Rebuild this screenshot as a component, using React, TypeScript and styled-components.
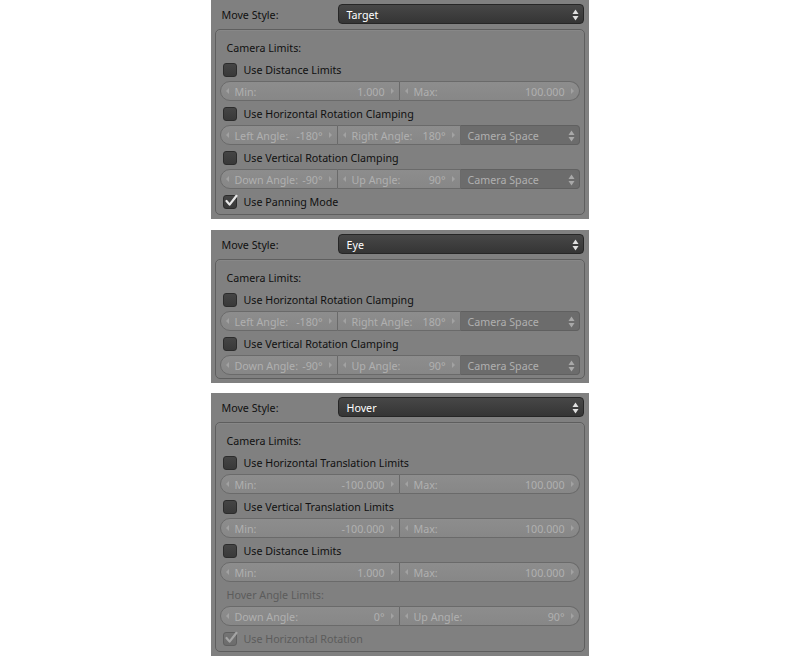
import React from "react";
import styled, { createGlobalStyle, css } from "styled-components";

const Global = createGlobalStyle`
  html, body { margin: 0; padding: 0; background: #ffffff; }
  body { font-family: "Noto Sans", "DejaVu Sans", sans-serif; font-size: 10.7px; }
`;

const Page = styled.div`
  width: 800px;
  height: 657px;
  display: flex;
  flex-direction: column;
  align-items: center;
  gap: 10px;
  overflow: hidden;
`;

const Panel = styled.div<{ $spaced?: boolean }>`
  width: 378px;
  box-sizing: border-box;
  background: #808080;
  padding: 4px;
  display: flex;
  flex-direction: column;
  margin-left: -1px;
  margin-top: ${(p) => (p.$spaced ? "1px" : "0")};
`;

const HeaderRow = styled.div`
  display: flex;
  align-items: center;
  height: 20px;
  margin-right: 1px;
`;

const HeaderLabel = styled.div`
  width: 123px;
  box-sizing: border-box;
  padding: 2px 0 0 7px;
  color: #101010;
`;

const Menu = styled.div`
  flex: 1;
  height: 20px;
  box-sizing: border-box;
  border: 1px solid #262626;
  border-radius: 4px;
  background: linear-gradient(#474747, #353535);
  color: #ffffff;
  display: flex;
  align-items: center;
  padding: 1px 4px 0 8px;
  justify-content: space-between;
`;

const Box = styled.div`
  margin-top: 5px;
  border: 1px solid #5e5e5e;
  border-radius: 5px;
  padding: 6px 4px 2px 4px;
  display: flex;
  flex-direction: column;
  box-shadow: inset 0 1px 0 rgba(255,255,255,0.06);
`;

const SectionLabel = styled.div<{ $disabled?: boolean }>`
  height: 22px;
  box-sizing: border-box;
  display: flex;
  align-items: center;
  padding: 2px 0 0 7px;
  color: ${(p) => (p.$disabled ? "#5c5c5c" : "#101010")};
`;

const CheckRow = styled.div<{ $disabled?: boolean }>`
  height: 22px;
  box-sizing: border-box;
  display: flex;
  align-items: center;
  gap: 7px;
  padding: 2px 0 0 3px;
  color: ${(p) => (p.$disabled ? "#5c5c5c" : "#101010")};
`;

const CheckBox = styled.div<{ $disabled?: boolean }>`
  width: 14px;
  height: 14px;
  box-sizing: border-box;
  border-radius: 3px;
  border: 1px solid ${(p) => (p.$disabled ? "#5f5f5f" : "#2c2c2c")};
  background: ${(p) =>
    p.$disabled ? "linear-gradient(#747474, #6c6c6c)" : "linear-gradient(#454545, #393939)"};
  display: flex;
  align-items: center;
  justify-content: center;
`;

const FieldRow = styled.div<{ $cols: string }>`
  height: 20px;
  margin: 1px 0;
  display: grid;
  grid-template-columns: ${(p) => p.$cols};
  box-sizing: border-box;
`;

const Field = styled.div<{ $first?: boolean; $last?: boolean }>`
  position: relative;
  box-sizing: border-box;
  height: 20px;
  background: linear-gradient(#8d8d8d, #878787);
  border: 1px solid #6a6a6a;
  border-left-width: ${(p) => (p.$first ? "1px" : "0")};
  ${(p) => p.$first && css`border-top-left-radius: 10px; border-bottom-left-radius: 10px;`}
  ${(p) => p.$last && css`border-top-right-radius: 10px; border-bottom-right-radius: 10px;`}
  display: flex;
  align-items: center;
  padding: 1px 14px 0 14px;
  color: #b0b0b0;
  white-space: nowrap;
`;

const FieldName = styled.span`
  flex: 1;
`;

const FieldValue = styled.span``;

const Arrow = styled.span<{ $side: "l" | "r" }>`
  position: absolute;
  top: 50%;
  margin-top: -3px;
  width: 0;
  height: 0;
  border-top: 3px solid transparent;
  border-bottom: 3px solid transparent;
  ${(p) =>
    p.$side === "l"
      ? css`left: 5px; border-right: 3px solid #a2a2a2;`
      : css`right: 5px; border-left: 3px solid #a2a2a2;`}
`;

const SpaceMenu = styled.div`
  box-sizing: border-box;
  height: 20px;
  background: #6c6c6c;
  border: 1px solid #606060;
  border-left: 0;
  border-top-right-radius: 4px;
  border-bottom-right-radius: 4px;
  color: #b0b0b0;
  display: flex;
  align-items: center;
  justify-content: space-between;
  padding: 1px 4px 0 7px;
`;

const UpDown = ({ color }: { color: string }) => (
  <svg width="7" height="12" viewBox="0 0 7 12">
    <path d="M3.5 0.5 L6.5 5 L0.5 5 Z" fill={color} />
    <path d="M3.5 11.5 L6.5 7 L0.5 7 Z" fill={color} />
  </svg>
);

const Check = ({ color }: { color: string }) => (
  <svg width="14" height="14" viewBox="0 0 14 14" style={{ marginTop: -2, marginRight: -2 }}>
    <path d="M2.5 7 L5.6 10.6 L12.5 1.8" fill="none" stroke={color} strokeWidth="2.2" strokeLinecap="round" strokeLinejoin="round" />
  </svg>
);

type NumSpec = { name: string; value: string };

const NumberField = ({ spec, first, last }: { spec: NumSpec; first?: boolean; last?: boolean }) => (
  <Field $first={first} $last={last}>
    <Arrow $side="l" />
    <FieldName>{spec.name}</FieldName>
    <FieldValue>{spec.value}</FieldValue>
    <Arrow $side="r" />
  </Field>
);

const RangeRow = ({ a, b }: { a: NumSpec; b: NumSpec }) => (
  <FieldRow $cols="1fr 1fr">
    <NumberField spec={a} first />
    <NumberField spec={b} last />
  </FieldRow>
);

const AngleRow = ({ a, b }: { a: NumSpec; b: NumSpec }) => (
  <FieldRow $cols="118px 123px 1fr">
    <NumberField spec={a} first />
    <NumberField spec={b} />
    <SpaceMenu>
      <span>Camera Space</span>
      <UpDown color="#a9a9a9" />
    </SpaceMenu>
  </FieldRow>
);

const CheckItem = ({ label, checked, disabled }: { label: string; checked?: boolean; disabled?: boolean }) => (
  <CheckRow $disabled={disabled}>
    <CheckBox $disabled={disabled}>{checked && <Check color={disabled ? "#a4a4a4" : "#e8e8e8"} />}</CheckBox>
    <span>{label}</span>
  </CheckRow>
);

const Header = ({ value }: { value: string }) => (
  <HeaderRow>
    <HeaderLabel>Move Style:</HeaderLabel>
    <Menu>
      <span>{value}</span>
      <UpDown color="#e0e0e0" />
    </Menu>
  </HeaderRow>
);

export default function App() {
  return (
    <>
      <Global />
      <Page>
        <Panel>
          <Header value="Target" />
          <Box>
            <SectionLabel>Camera Limits:</SectionLabel>
            <CheckItem label="Use Distance Limits" />
            <RangeRow a={{ name: "Min:", value: "1.000" }} b={{ name: "Max:", value: "100.000" }} />
            <CheckItem label="Use Horizontal Rotation Clamping" />
            <AngleRow a={{ name: "Left Angle:", value: "-180°" }} b={{ name: "Right Angle:", value: "180°" }} />
            <CheckItem label="Use Vertical Rotation Clamping" />
            <AngleRow a={{ name: "Down Angle:", value: "-90°" }} b={{ name: "Up Angle:", value: "90°" }} />
            <CheckItem label="Use Panning Mode" checked />
          </Box>
        </Panel>
        <Panel $spaced>
          <Header value="Eye" />
          <Box>
            <SectionLabel>Camera Limits:</SectionLabel>
            <CheckItem label="Use Horizontal Rotation Clamping" />
            <AngleRow a={{ name: "Left Angle:", value: "-180°" }} b={{ name: "Right Angle:", value: "180°" }} />
            <CheckItem label="Use Vertical Rotation Clamping" />
            <AngleRow a={{ name: "Down Angle:", value: "-90°" }} b={{ name: "Up Angle:", value: "90°" }} />
          </Box>
        </Panel>
        <Panel>
          <Header value="Hover" />
          <Box>
            <SectionLabel>Camera Limits:</SectionLabel>
            <CheckItem label="Use Horizontal Translation Limits" />
            <RangeRow a={{ name: "Min:", value: "-100.000" }} b={{ name: "Max:", value: "100.000" }} />
            <CheckItem label="Use Vertical Translation Limits" />
            <RangeRow a={{ name: "Min:", value: "-100.000" }} b={{ name: "Max:", value: "100.000" }} />
            <CheckItem label="Use Distance Limits" />
            <RangeRow a={{ name: "Min:", value: "1.000" }} b={{ name: "Max:", value: "100.000" }} />
            <SectionLabel $disabled>Hover Angle Limits:</SectionLabel>
            <RangeRow a={{ name: "Down Angle:", value: "0°" }} b={{ name: "Up Angle:", value: "90°" }} />
            <CheckItem label="Use Horizontal Rotation" checked disabled />
          </Box>
        </Panel>
      </Page>
    </>
  );
}
